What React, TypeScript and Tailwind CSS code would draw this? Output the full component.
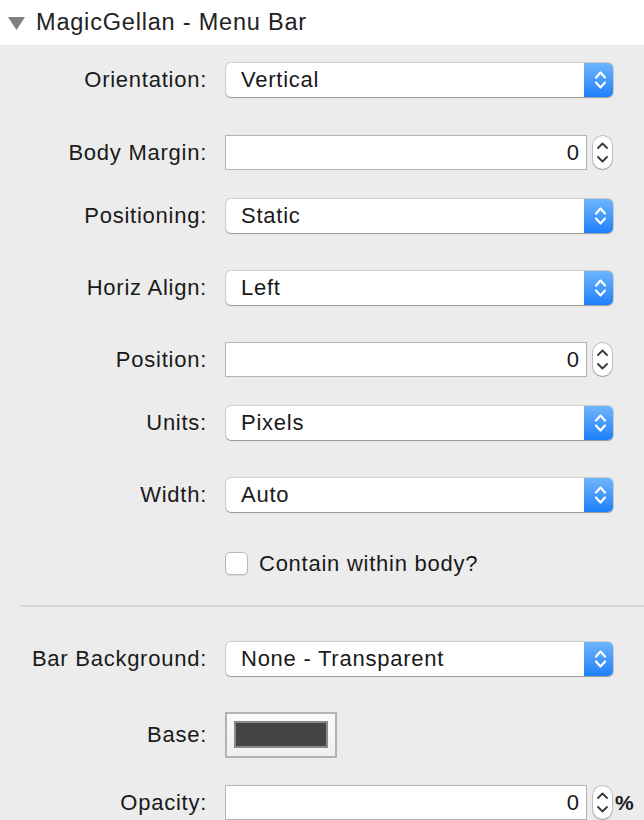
import type { ReactNode } from "react";

const FONT = { fontFamily: '"Liberation Sans", Arial, sans-serif' };

function Label({ children }: { children: ReactNode }) {
  return (
    <div className="w-[207px] shrink-0 text-right text-[22px] tracking-[0.75px] text-[#1a1a1a] leading-none">
      {children}
    </div>
  );
}

function Select({ value }: { value: string }) {
  return (
    <div className="ml-[19px] flex h-[34px] w-[387px] items-stretch overflow-hidden rounded-[5px] bg-white shadow-[0_0_0_1px_rgba(0,0,0,0.12),0_1px_1px_rgba(0,0,0,0.25)]">
      <div className="flex flex-1 items-center pl-[15px] text-[22px] tracking-[0.75px] text-[#1a1a1a]">{value}</div>
      <div className="flex w-[29px] items-center justify-center bg-gradient-to-b from-[#6db4fb] to-[#1a80fb]">
        <svg width="29" height="34" viewBox="0 0 29 34" fill="none" stroke="white" strokeWidth="2.2" strokeLinecap="round" strokeLinejoin="round">
          <path d="M12 14.5 L16.5 9.5 L21 14.5" />
          <path d="M12 19.5 L16.5 24.5 L21 19.5" />
        </svg>
      </div>
    </div>
  );
}

function Stepper() {
  return (
    <div className="ml-[6px] flex h-[33px] w-[19px] items-center justify-center rounded-full bg-white shadow-[0_0_0_1px_rgba(0,0,0,0.18),0_1px_1px_rgba(0,0,0,0.2)]">
      <svg width="19" height="33" viewBox="0 0 19 33" fill="none" stroke="#3a3a3a" strokeWidth="1.8" strokeLinecap="round" strokeLinejoin="round">
        <path d="M5 12 L9.5 7.5 L14 12" />
        <path d="M5 21 L9.5 25.5 L14 21" />
      </svg>
    </div>
  );
}

function NumberField({ value, suffix }: { value: string; suffix?: string }) {
  return (
    <div className="ml-[18px] flex items-center">
      <div className="flex h-[35px] w-[362px] items-center justify-end border border-[#b4b4b4] bg-white pr-[7px] text-[22px] text-[#1a1a1a]">
        {value}
      </div>
      <Stepper />
      {suffix && <span className="ml-[3px] text-[21px] font-bold text-[#1a1a1a]">{suffix}</span>}
    </div>
  );
}

function Row({ label, children, className }: { label: string; children: ReactNode; className: string }) {
  return (
    <div className={`flex h-[35px] items-center ${className}`}>
      <Label>{label}</Label>
      {children}
    </div>
  );
}

export default function App() {
  return (
    <div style={FONT} className="h-[820px] w-[644px] overflow-hidden bg-[#ececec]">
      {/* Header */}
      <div className="flex h-[45px] items-center bg-white">
        <svg className="ml-[8px]" width="17" height="14" viewBox="0 0 17 14">
          <path d="M0 1 L17 1 L8.5 14 Z" fill="#7f7f7f" />
        </svg>
        <span className="ml-[11px] text-[23.5px] tracking-[0.8px] text-[#222]">MagicGellan - Menu Bar</span>
      </div>

      <Row label="Orientation:" className="mt-[17px]">
        <Select value="Vertical" />
      </Row>
      <Row label="Body Margin:" className="mt-[38px]">
        <NumberField value="0" />
      </Row>
      <Row label="Positioning:" className="mt-[28px]">
        <Select value="Static" />
      </Row>
      <Row label="Horiz Align:" className="mt-[37px]">
        <Select value="Left" />
      </Row>
      <Row label="Position:" className="mt-[37px]">
        <NumberField value="0" />
      </Row>
      <Row label="Units:" className="mt-[28px]">
        <Select value="Pixels" />
      </Row>
      <Row label="Width:" className="mt-[37px]">
        <Select value="Auto" />
      </Row>

      {/* Checkbox */}
      <div className="mt-[34px] flex h-[35px] items-center pl-[225px]">
        <div className="h-[23px] w-[23px] rounded-[5px] border border-[#b9b9b9] bg-white shadow-[0_1px_1px_rgba(0,0,0,0.08)]" />
        <span className="ml-[11px] text-[22px] tracking-[0.75px] text-[#1a1a1a]">Contain within body?</span>
      </div>

      <div className="ml-[20px] mt-[24px] h-[2px] bg-[#d6d6d6]" />

      <Row label="Bar Background:" className="mt-[34px]">
        <Select value="None - Transparent" />
      </Row>

      <div className="mt-[36px] flex h-[45px] items-center">
        <Label>Base:</Label>
        <div className="ml-[18px] flex h-[46px] w-[112px] items-center justify-center border-2 border-[#b3b3b3] bg-gradient-to-b from-[#fafafa] to-[#f0f0f0]">
          <div className="h-[27px] w-[94px] border-2 border-[#8a8a8a] bg-[#454545]" />
        </div>
      </div>

      <Row label="Opacity:" className="mt-[28px]">
        <NumberField value="0" suffix="%" />
      </Row>
    </div>
  );
}
